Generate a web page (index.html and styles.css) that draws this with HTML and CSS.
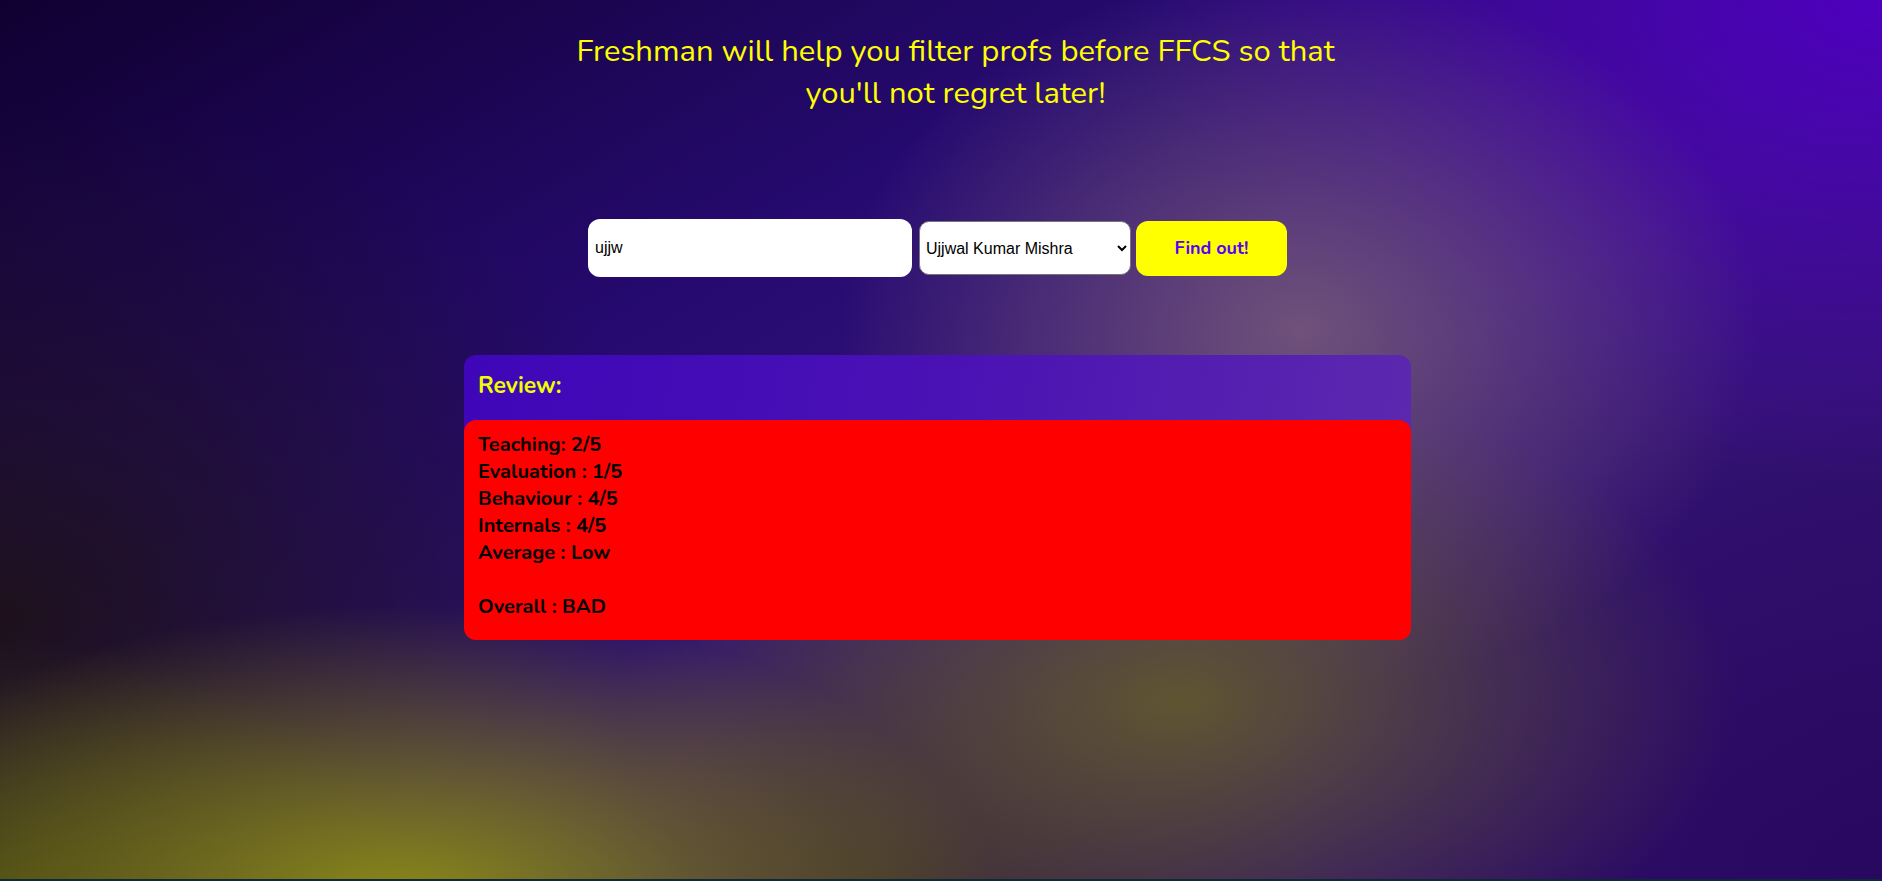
FILE: index.html
```html
<!DOCTYPE html>
<html lang="en">
<head>
<meta charset="utf-8">
<title>Freshman</title>
<link rel="stylesheet" href="styles.css">
</head>
<body>
  <main class="page">
    <header class="intro">
      <h1 class="tagline">Freshman will help you filter profs before FFCS so that you'll not regret later!</h1>
    </header>

    <form class="search" onsubmit="return false;">
      <input class="search-input" type="text" value="ujjw">
      <select class="search-select">
        <option>Ujjwal Kumar Mishra</option>
      </select>
      <button class="search-btn" type="submit">Find out!</button>
    </form>

    <section class="review">
      <div class="review-head">Review:</div>
      <div class="review-body">
        <div>Teaching: 2/5</div>
        <div>Evaluation : 1/5</div>
        <div>Behaviour : 4/5</div>
        <div>Internals : 4/5</div>
        <div>Average : Low</div>
        <div class="spacer">&nbsp;</div>
        <div>Overall : BAD</div>
      </div>
    </section>
  </main>
</body>
</html>
```

FILE: styles.css
```css
* { box-sizing: border-box; }

html {
  background: #0b2a3a;
}

body {
  margin: 0;
  min-height: 100vh;
  border-bottom: 2px solid #0b2a3a;
  font-family: "Nunito", Lato, "Noto Sans", sans-serif;
  background:
    radial-gradient(ellipse 600px 300px at 400px 905px, rgba(140,140,20,1), rgba(140,140,20,0) 100%),
    radial-gradient(ellipse 420px 260px at 0px 900px, rgba(64,64,12,0.9), rgba(64,64,12,0) 100%),
    radial-gradient(ellipse 560px 320px at 1180px 700px, rgba(100,92,42,0.9), rgba(100,92,42,0) 100%),
    radial-gradient(ellipse 460px 280px at 880px 880px, rgba(55,40,40,0.85), rgba(55,40,40,0) 100%),
    radial-gradient(ellipse 460px 360px at 1300px 330px, rgba(118,88,122,0.9), rgba(118,88,122,0) 100%),
    radial-gradient(ellipse 750px 480px at 1882px 0px, rgba(78,0,190,1), rgba(78,0,190,0) 100%),
    radial-gradient(ellipse 720px 520px at 0px 620px, rgba(30,18,24,0.95), rgba(30,18,24,0) 100%),
    radial-gradient(ellipse 600px 500px at 1882px 881px, rgba(40,8,95,0.9), rgba(40,8,95,0) 100%),
    linear-gradient(150deg, #100030 0%, #260a70 35%, #361678 60%, #2c0c66 100%);
}

.page {
  display: flex;
  flex-direction: column;
  align-items: center;
  padding-right: 7px;
}

.intro {
  width: 100%;
  display: flex;
  justify-content: center;
  padding: 30px 0 0 36px;
}

.tagline {
  margin: 0;
  max-width: 810px;
  text-align: center;
  font-weight: 400;
  font-size: 31px;
  line-height: 42px;
  color: #ffff00;
}

.search {
  margin-top: 105px;
  display: flex;
  align-items: center;
}

.search-input {
  width: 324px;
  height: 58px;
  border: none;
  border-radius: 12px;
  padding: 0 7px;
  font-family: "Liberation Sans", Arial, sans-serif;
  font-size: 16px;
  color: #000;
  background: #fff;
  outline: none;
}

.search-select {
  margin-left: 7px;
  width: 212px;
  height: 54px;
  border: 1px solid #767676;
  border-radius: 10px;
  padding: 0 2px;
  font-family: "Liberation Sans", Arial, sans-serif;
  font-size: 16px;
  color: #000;
  background: #fff;
}

.search-btn {
  margin-left: 5px;
  width: 151px;
  height: 55px;
  border: none;
  border-radius: 12px;
  background: #ffff00;
  color: #5500ff;
  font-family: inherit;
  font-weight: 700;
  font-size: 18px;
  cursor: pointer;
}

.review {
  margin-top: 78px;
  width: 947px;
  border-radius: 12px;
  background: linear-gradient(100deg, #3e06b8 0%, #4a12b4 50%, #5e2aae 100%);
}

.review-head {
  height: 65px;
  padding: 16px 14px 0;
  font-weight: 700;
  font-size: 23px;
  line-height: 30px;
  color: #f0ff00;
}

.review-body {
  background: #ff0000;
  border-radius: 12px;
  padding: 11px 14px 20px;
  font-weight: 700;
  font-size: 20px;
  line-height: 27px;
  color: #000;
}
```
